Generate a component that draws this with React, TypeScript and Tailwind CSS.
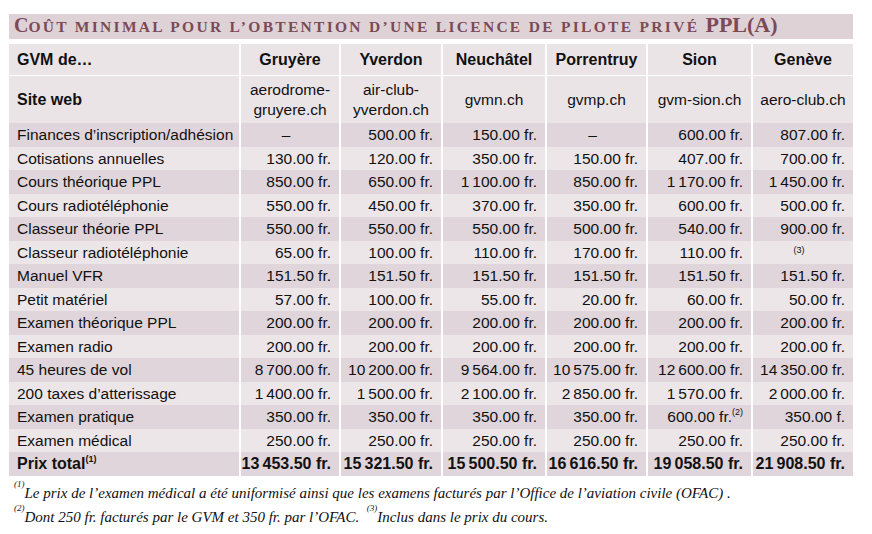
import React from "react";

const S = "\u2009";

type Row = { label: string; values: React.ReactNode[]; bold?: boolean };

const cities = ["Gruyère", "Yverdon", "Neuchâtel", "Porrentruy", "Sion", "Genève"];

const sites: React.ReactNode[] = [
    <>aerodrome-<br />gruyere.ch</>,
    <>air-club-<br />yverdon.ch</>,
    "gvmn.ch",
    "gvmp.ch",
    "gvm-sion.ch",
    "aero-club.ch",
];

function Sup({ children }: { children: React.ReactNode }) {
    return <sup className="text-[9px] leading-none align-[6px]">{children}</sup>;
}

const rows: Row[] = [
    { label: "Finances d’inscription/adhésion", values: ["–", "500.00 fr.", "150.00 fr.", "–", "600.00 fr.", "807.00 fr."] },
    { label: "Cotisations annuelles", values: ["130.00 fr.", "120.00 fr.", "350.00 fr.", "150.00 fr.", "407.00 fr.", "700.00 fr."] },
    { label: "Cours théorique PPL", values: ["850.00 fr.", "650.00 fr.", `1${S}100.00 fr.`, "850.00 fr.", `1${S}170.00 fr.`, `1${S}450.00 fr.`] },
    { label: "Cours radiotéléphonie", values: ["550.00 fr.", "450.00 fr.", "370.00 fr.", "350.00 fr.", "600.00 fr.", "500.00 fr."] },
    { label: "Classeur théorie PPL", values: ["550.00 fr.", "550.00 fr.", "550.00 fr.", "500.00 fr.", "540.00 fr.", "900.00 fr."] },
    { label: "Classeur radiotéléphonie", values: ["65.00 fr.", "100.00 fr.", "110.00 fr.", "170.00 fr.", "110.00 fr.", null] },
    { label: "Manuel VFR", values: ["151.50 fr.", "151.50 fr.", "151.50 fr.", "151.50 fr.", "151.50 fr.", "151.50 fr."] },
    { label: "Petit matériel", values: ["57.00 fr.", "100.00 fr.", "55.00 fr.", "20.00 fr.", "60.00 fr.", "50.00 fr."] },
    { label: "Examen théorique PPL", values: ["200.00 fr.", "200.00 fr.", "200.00 fr.", "200.00 fr.", "200.00 fr.", "200.00 fr."] },
    { label: "Examen radio", values: ["200.00 fr.", "200.00 fr.", "200.00 fr.", "200.00 fr.", "200.00 fr.", "200.00 fr."] },
    { label: "45 heures de vol", values: [`8${S}700.00 fr.`, `10${S}200.00 fr.`, `9${S}564.00 fr.`, `10${S}575.00 fr.`, `12${S}600.00 fr.`, `14${S}350.00 fr.`] },
    { label: "200 taxes d’atterissage", values: [`1${S}400.00 fr.`, `1${S}500.00 fr.`, `2${S}100.00 fr.`, `2${S}850.00 fr.`, `1${S}570.00 fr.`, `2${S}000.00 fr.`] },
    {
        label: "Examen pratique",
        values: ["350.00 fr.", "350.00 fr.", "350.00 fr.", "350.00 fr.", <>600.00 fr.<Sup>(2)</Sup></>, "350.00 f."],
    },
    { label: "Examen médical", values: ["250.00 fr.", "250.00 fr.", "250.00 fr.", "250.00 fr.", "250.00 fr.", "250.00 fr."] },
    {
        label: "Prix total",
        bold: true,
        values: [`13${S}453.50 fr.`, `15${S}321.50 fr.`, `15${S}500.50 fr.`, `16${S}616.50 fr.`, `19${S}058.50 fr.`, `21${S}908.50 fr.`],
    },
];

const grid = "grid grid-cols-[230px_98px_100px_102px_99px_103px_100px] gap-x-[2px]";

export default function App() {
    return (
        <div className="w-[872px] h-[534px] bg-white pt-[14px] pl-[9px] text-[#111] font-['Liberation_Sans',Arial,sans-serif]">
            {/* title bar, small caps built by hand */}
            <div className="w-[844px] h-[25px] bg-[#ded2d6] flex items-end pl-[5px]">
                <h1 className="font-['Liberation_Serif',serif] font-bold text-[#7b4a56] leading-[24px] whitespace-nowrap">
                    <span className="text-[20px]">C</span>
                    <span className="text-[15.5px] tracking-[2.3px]">OÛT MINIMAL POUR L’OBTENTION D’UNE LICENCE DE PILOTE PRIVÉ </span>
                    <span className="text-[22px]">PPL(A)</span>
                </h1>
            </div>

            <div className="w-[844px] mt-[5px] text-[15.5px]">
                {/* header */}
                <div className={grid}>
                    <div className="h-[31px] bg-[#ebe4e7] flex items-center pl-2 font-bold text-[16px]">GVM de…</div>
                    {cities.map((c) => (
                        <div key={c} className="h-[31px] bg-[#ebe4e7] flex items-center justify-center font-bold text-[16px]">
                            {c}
                        </div>
                    ))}
                </div>
                {/* site web */}
                <div className={grid + " mt-px"}>
                    <div className="h-[47px] bg-[#ebe4e7] flex items-center pl-2 font-bold text-[16px]">Site web</div>
                    {sites.map((s, i) => (
                        <div key={i} className="h-[47px] bg-[#ebe4e7] flex items-center justify-center text-center leading-[20px]">
                            <span>{s}</span>
                        </div>
                    ))}
                </div>
                {rows.map((r, i) => {
                    const bg = i % 2 === 0 ? "bg-[#e0d5da]" : "bg-[#ede6e9]";
                    return (
                        <div key={r.label} className={grid + (r.bold ? " font-bold text-[16px]" : "")}>
                            <div className={`h-[23.5px] ${bg} flex items-center pl-2 whitespace-nowrap`}>
                                {r.label}
                                {r.bold && <Sup>(1)</Sup>}
                            </div>
                            {r.values.map((v, j) => (
                                <div
                                    key={j}
                                    className={`h-[23.5px] ${bg} flex items-center pr-[8px] whitespace-nowrap ${
                                        v === "–" ? "justify-center" : "justify-end"
                                    }`}
                                >
                                    {v === null ? (
                                        <span className="w-full text-center text-[9px] self-start pt-[3px]">(3)</span>
                                    ) : (
                                        v
                                    )}
                                </div>
                            ))}
                        </div>
                    );
                })}
            </div>

            {/* notes */}
            <div className="mt-[5px] pl-[5px] font-['Liberation_Serif',serif] italic text-[15px] leading-[24px] text-[#111]">
                <p>
                    <Sup>(1)</Sup>Le prix de l’examen médical a été uniformisé ainsi que les examens facturés par l’Office de
                    l’aviation civile (OFAC) .
                </p>
                <p>
                    <Sup>(2)</Sup>Dont 250 fr. facturés par le GVM et 350 fr. par l’OFAC.&nbsp; <Sup>(3)</Sup>Inclus dans le prix du
                    cours.
                </p>
            </div>
        </div>
    );
}
